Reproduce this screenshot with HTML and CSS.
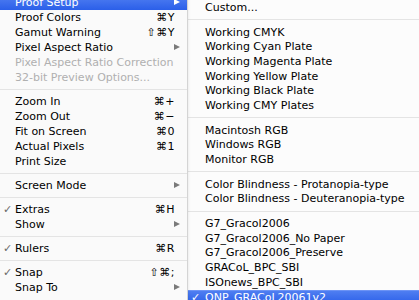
FILE: index.html
```html
<!DOCTYPE html>
<html>
<head>
<meta charset="utf-8">
<link rel="stylesheet" href="styles.css">
</head>
<body>
<div class="screen">
  <ul class="menu main">
    <li class="item sel"><span class="label">Proof Setup</span><span class="arrow"></span></li>
    <li class="item"><span class="label">Proof Colors</span><span class="key">⌘Y</span></li>
    <li class="item"><span class="label">Gamut Warning</span><span class="key">⇧⌘Y</span></li>
    <li class="item"><span class="label">Pixel Aspect Ratio</span><span class="arrow"></span></li>
    <li class="item off"><span class="label">Pixel Aspect Ratio Correction</span></li>
    <li class="item off"><span class="label">32-bit Preview Options...</span></li>
    <li class="sep"></li>
    <li class="item"><span class="label">Zoom In</span><span class="key">⌘+</span></li>
    <li class="item"><span class="label">Zoom Out</span><span class="key">⌘−</span></li>
    <li class="item"><span class="label">Fit on Screen</span><span class="key">⌘0</span></li>
    <li class="item"><span class="label">Actual Pixels</span><span class="key">⌘1</span></li>
    <li class="item"><span class="label">Print Size</span></li>
    <li class="sep"></li>
    <li class="item"><span class="label">Screen Mode</span><span class="arrow"></span></li>
    <li class="sep"></li>
    <li class="item"><span class="check">✓</span><span class="label">Extras</span><span class="key">⌘H</span></li>
    <li class="item"><span class="label">Show</span><span class="arrow"></span></li>
    <li class="sep"></li>
    <li class="item"><span class="check">✓</span><span class="label">Rulers</span><span class="key">⌘R</span></li>
    <li class="sep"></li>
    <li class="item"><span class="check">✓</span><span class="label">Snap</span><span class="key">⇧⌘;</span></li>
    <li class="item"><span class="label">Snap To</span><span class="arrow"></span></li>
  </ul>
  <ul class="menu sub">
    <li class="item"><span class="label">Custom...</span></li>
    <li class="sep"></li>
    <li class="item"><span class="label">Working CMYK</span></li>
    <li class="item"><span class="label">Working Cyan Plate</span></li>
    <li class="item"><span class="label">Working Magenta Plate</span></li>
    <li class="item"><span class="label">Working Yellow Plate</span></li>
    <li class="item"><span class="label">Working Black Plate</span></li>
    <li class="item"><span class="label">Working CMY Plates</span></li>
    <li class="sep"></li>
    <li class="item"><span class="label">Macintosh RGB</span></li>
    <li class="item"><span class="label">Windows RGB</span></li>
    <li class="item"><span class="label">Monitor RGB</span></li>
    <li class="sep"></li>
    <li class="item"><span class="label">Color Blindness - Protanopia-type</span></li>
    <li class="item"><span class="label">Color Blindness - Deuteranopia-type</span></li>
    <li class="sep"></li>
    <li class="item"><span class="label">G7_Gracol2006</span></li>
    <li class="item"><span class="label">G7_Gracol2006_No Paper</span></li>
    <li class="item"><span class="label">G7_Gracol2006_Preserve</span></li>
    <li class="item"><span class="label">GRACoL_BPC_SBI</span></li>
    <li class="item"><span class="label">ISOnews_BPC_SBI</span></li>
    <li class="item sel"><span class="check">✓</span><span class="label">ONP_GRACoL20061v2</span></li>
  </ul>
</div>
</body>
</html>
```
FILE: styles.css
```css
* { box-sizing: border-box; }
html, body {
  margin: 0;
  padding: 0;
  width: 419px;
  height: 300px;
  overflow: hidden;
  background: #fbfbfb;
}
.screen {
  display: flex;
  width: 419px;
  height: 300px;
  font-family: "DejaVu Sans", "Liberation Sans", sans-serif;
  font-size: 11px;
  color: #000;
}
.menu {
  list-style: none;
  margin: 0;
  padding: 0;
  display: flex;
  flex-direction: column;
}
.main {
  width: 188px;
  margin-top: -5px;
  background: #fafafa;
  border-right: 1px solid #d4d4d4;
  box-shadow: 1px 0 2px rgba(0,0,0,0.06);
  position: relative;
  z-index: 1;
}
.sub {
  flex: 1;
  background: #fcfcfc;
}
.item {
  position: relative;
  display: flex;
  align-items: center;
  flex: none;
  height: 15px;
  line-height: 15px;
  white-space: nowrap;
}
.main .item { padding: 0 12px 0 15px; }
.sub .item { height: 14.7px; padding: 0 12px 0 17px; }
.label { flex: 1; }
.key {
  flex: none;
  text-align: right;
  letter-spacing: 0.5px;
}
.check {
  position: absolute;
  left: 3px;
  top: 0;
  color: #6a6a6a;
  font-size: 11px;
}
.sub .check { left: 3px; color: #fff; }
.off { color: #b0b0b0; }
.sep {
  flex: none;
  height: 9px;
  display: flex;
  align-items: center;
}
.sub .sep { height: 10px; }
.sep::before {
  content: "";
  display: block;
  width: 100%;
  height: 1px;
  background: #e4e4e4;
}
.arrow {
  position: absolute;
  right: 7px;
  top: 4px;
  width: 0;
  height: 0;
  border-top: 3.5px solid transparent;
  border-bottom: 3.5px solid transparent;
  border-left: 6px solid #7a7a7a;
}
.sel {
  color: #fff;
  background: linear-gradient(to bottom, #6c93f5 0, #6c93f5 1px, #4f7ef1 1px, #2b5fe9 100%);
}
.sel .arrow { border-left-color: #fff; }
```
